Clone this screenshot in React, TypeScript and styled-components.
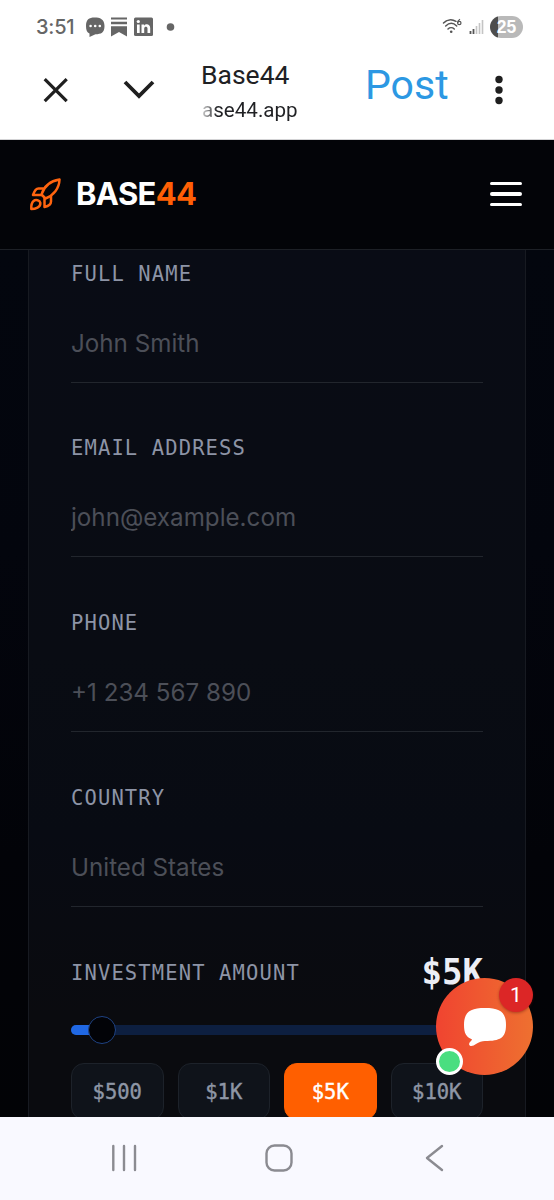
import React from "react";
import styled, { createGlobalStyle } from "styled-components";

const GlobalStyle = createGlobalStyle`
  * { box-sizing: border-box; }
  body { margin: 0; background: #020308; font-family: Inter, "Liberation Sans", sans-serif; }
  button { font: inherit; border: 0; background: none; padding: 0; margin: 0; }
`;

const mono = `"DejaVu Sans Mono", "Liberation Mono", monospace`;

const Screen = styled.div`
  width: 554px;
  height: 1200px;
  display: flex;
  flex-direction: column;
  overflow: hidden;
`;

const BrowserChrome = styled.div`
  height: 140px;
  flex: none;
  background: #fff;
  border-bottom: 1.5px solid #d3d3d5;
`;

const StatusBar = styled.div`
  height: 54px;
  padding: 0 31px 0 36px;
  display: flex;
  align-items: center;
  justify-content: space-between;
`;

const StatusGroup = styled.div`
  display: flex;
  align-items: center;
`;

const Clock = styled.span`
  width: 49px;
  font: 500 20px/24px Inter, sans-serif;
  letter-spacing: -0.2px;
  color: #666;
`;

const Battery = styled.div`
  width: 33px;
  height: 22px;
  margin-left: 6px;
  border-radius: 11px;
  background: linear-gradient(90deg, #4d4d4d 25%, #b9b9b9 25%);
  color: #fff;
  font: 700 17.5px/23px "Liberation Sans", sans-serif;
  text-align: center;
`;

const AddressBar = styled.div`
  height: 72px;
  display: flex;
  align-items: center;
  padding-left: 41px;
`;

const IconButton = styled.button<{ $gap: number }>`
  display: flex;
  margin-right: ${(p) => p.$gap}px;
`;

const PageInfo = styled.div`
  width: 164px;
  font-family: Roboto, sans-serif;
  color: #202124;
`;

const PageTitle = styled.div`
  font-size: 26.5px;
  line-height: 32px;
  margin-top: 2px;
`;

const PageUrl = styled.div`
  font-size: 20.6px;
  line-height: 26px;
  margin-top: 6px;
  padding-left: 1px;
  width: 110px;
  background: linear-gradient(90deg, #ddd 0, #202124 16px);
  background-clip: text;
  color: transparent;
`;

const PostLabel = styled.div`
  width: 130px;
  font: 400 41px/48px Roboto, sans-serif;
  color: #2c98e3;
  margin-top: -11px;
`;

const SiteHeader = styled.header`
  height: 110px;
  flex: none;
  padding: 0 32px 1px 28px;
  display: flex;
  align-items: center;
  justify-content: space-between;
  background: #030408;
  border-bottom: 1.5px solid #1d2026;
`;

const Brand = styled.div`
  display: flex;
  align-items: center;
  gap: 13px;
  color: #fff;
  font: 700 31px/40px Inter, sans-serif;
  letter-spacing: -0.65px;
`;

const Accent = styled.span`
  color: #ff5f05;
`;

const MenuButton = styled.button`
  width: 32px;
  height: 25px;
  display: flex;
  flex-direction: column;
  justify-content: space-between;
`;

const MenuLine = styled.span`
  height: 3.4px;
  border-radius: 2px;
  background: #fff;
`;

const Content = styled.main`
  height: 867px;
  flex: none;
  overflow: hidden;
  position: relative;
  padding: 0 28px;
  background: linear-gradient(180deg, #03060e 0%, #03050d 35%, #020308 70%, #020306 100%);
`;

const Card = styled.form`
  height: 900px;
  padding: 8.5px 42px 0;
  border: 1px solid #171a21;
  border-top: 0;
  background: linear-gradient(180deg, #090c15 0%, #090c13 45%, #080b13 65%, #0a0b0f 85%, #0a0b0f 100%);
`;

const Field = styled.div`
  height: 174.7px;
  display: flex;
  flex-direction: column;
  gap: 18px;
`;

const Label = styled.label`
  font: 400 20.5px/28px ${mono};
  letter-spacing: 1.12px;
  color: #8d94a6;
  white-space: nowrap;
  transform: translateY(0.5px) scaleY(1.07);
`;

const Input = styled.input`
  width: 100%;
  height: 78px;
  padding: 0;
  border: 0;
  border-bottom: 1.5px solid #22262d;
  border-radius: 0;
  outline: 0;
  background: transparent;
  font: 400 24.2px/30px Inter, sans-serif;
  &::placeholder { color: #4c4f58; opacity: 1; }
`;

const AmountRow = styled.div`
  height: 28px;
  margin-top: 1px;
  display: flex;
  align-items: center;
  justify-content: space-between;
`;

const AmountValue = styled.span`
  font: 700 34px/28px ${mono};
  color: #eceef5;
  transform: translateY(-1px) scaleY(1.06);
`;

const Track = styled.div`
  height: 10px;
  margin-top: 39px;
  border-radius: 5px;
  background: #0d1f40;
  display: flex;
  align-items: center;
`;

const Filled = styled.div`
  width: 31px;
  height: 10px;
  border-radius: 5px 0 0 5px;
  background: #2068e4;
`;

const Thumb = styled.div`
  width: 28px;
  height: 28px;
  flex: none;
  margin-left: -14px;
  border-radius: 50%;
  border: 1.5px solid #1f4384;
  background: #020307;
`;

const Presets = styled.div`
  margin-top: 28px;
  display: grid;
  grid-template-columns: repeat(4, 1fr);
  gap: 14px;
`;

const Preset = styled.button<{ $active?: boolean }>`
  height: 57px;
  border-radius: 13px;
  border: 1px solid ${(p) => (p.$active ? "#ff5f00" : "#1d222a")};
  background: ${(p) => (p.$active ? "#ff5f00" : "#0f131a")};
  color: ${(p) => (p.$active ? "#fff" : "#8e96a5")};
  font: 400 20.5px/28px ${mono};
  -webkit-text-stroke: 0.4px currentColor;
`;

const PresetText = styled.span`
  display: block;
  transform: translateY(-0.5px) scaleY(1.05);
`;

const Chat = styled.button`
  position: absolute;
  left: 436px;
  top: 728px;
  width: 97px;
  height: 97px;
  border-radius: 50%;
  background: linear-gradient(90deg, #f04430, #ee7030);
  display: flex;
  align-items: center;
  justify-content: center;
`;

const Badge = styled.span`
  position: absolute;
  right: 0;
  top: 0;
  width: 34px;
  height: 34px;
  border-radius: 50%;
  background: #dc2626;
  box-shadow: 0 1px 3px rgba(90, 20, 10, 0.45);
  color: #fff;
  font: 400 21px/34px Roboto, sans-serif;
  text-align: center;
`;

const OnlineDot = styled.span`
  position: absolute;
  left: 0;
  bottom: 0;
  width: 27px;
  height: 27px;
  border-radius: 50%;
  border: 3px solid #fff;
  background: #4ade80;
`;

const SystemNav = styled.nav`
  height: 83px;
  flex: none;
  background: #f9f9ff;
  padding: 0 107px 2px 110px;
  display: flex;
  align-items: center;
  justify-content: space-between;
`;

const fields = [
  ["Full name", "John Smith"],
  ["Email address", "john@example.com"],
  ["Phone", "+1 234 567 890"],
  ["Country", "United States"],
];

const presets = ["$500", "$1K", "$5K", "$10K"];

export default function App() {
  return (
    <Screen>
      <GlobalStyle />
      <BrowserChrome>
        <StatusBar>
          <StatusGroup>
            <Clock>3:51</Clock>
            <svg width="92" height="22" viewBox="0 0 92 22" fill="#666">
              <path d="M9.500 1.500C15 1.500 19.500 3 19.500 10s-3.500 8-9 8.300L4.500 21v-3.500C2 16.500 1 14 1 10c0-6.500 3-8.500 8.500-8.500z" />
              <g fill="#fff"><circle cx="5.600" cy="10" r="1.300" /><circle cx="10.200" cy="10" r="1.300" /><circle cx="14.800" cy="10" r="1.300" /></g>
              <path d="M26 1.500h16v2H26zM26 5.800h16v2.500H26zM26 10.300h16v10.200l-8-4.500-8 4.500z" />
              <rect x="49" y="1.500" width="19" height="18.500" rx="1.500" />
              <g fill="#fff"><circle cx="53.300" cy="5.500" r="1.600" /><path d="M52 8.500h2.700v8.500H52zM56.500 8.500h2.600v1.200c1.600-2.300 6.100-1.900 6.100 2.300v5h-2.700v-4.500c0-2.500-3.300-2.400-3.300 0V17h-2.700z" /></g>
              <circle cx="85.500" cy="11" r="3.800" />
            </svg>
          </StatusGroup>
          <StatusGroup>
            <svg width="42" height="20" viewBox="0 0 42 20" fill="none" stroke="#555" strokeWidth="1.500">
              <path d="M1.500 6C5 2.300 10 2 14 4.300M3.700 9c3.500-3.300 7.700-3.300 11 0M6 12c1.800-1.700 4.500-1.700 6.300 0" strokeLinecap="round" />
              <circle cx="9.200" cy="14.800" r="1.300" fill="#555" stroke="none" />
              <path d="M18 2.300c-1.800 1-2.400 2.600-2.400 3.700" strokeWidth="1.200" />
              <circle cx="17.300" cy="6" r="1.700" strokeWidth="1.200" />
              <path d="M28.500 14v3M31.500 12v5" strokeWidth="1.800" />
              <path d="M34.500 9v8M37.500 6v11M40.500 3v14" stroke="#c4c4c4" strokeWidth="1.600" />
            </svg>
            <Battery>25</Battery>
          </StatusGroup>
        </StatusBar>
        <AddressBar>
          <IconButton $gap={51} aria-label="Close">
            <svg width="29" height="28" viewBox="0 0 29 28" stroke="#1f1f1f" strokeWidth="3.200"><path d="M3.700 3.200l22 22M25.700 3.200l-22 22" /></svg>
          </IconButton>
          <IconButton $gap={45} aria-label="Minimize">
            <svg width="35" height="28" viewBox="0 0 35 28" fill="none" stroke="#1f1f1f" strokeWidth="3.800"><path d="M4 6l14 14L32 6" /></svg>
          </IconButton>
          <PageInfo>
            <PageTitle>Base44</PageTitle>
            <PageUrl>ase44.app</PageUrl>
          </PageInfo>
          <PostLabel>Post</PostLabel>
          <svg width="8" height="30" viewBox="0 0 8 30" fill="#1f1f1f"><circle cx="4" cy="4.500" r="3.700" /><circle cx="4" cy="15" r="3.700" /><circle cx="4" cy="25.500" r="3.700" /></svg>
        </AddressBar>
      </BrowserChrome>

      <SiteHeader>
        <Brand>
          <svg width="35" height="35" viewBox="0 0 35 35" fill="none" stroke="#ff640f" strokeWidth="2.500" strokeLinecap="round" strokeLinejoin="round">
            <path d="M13.500 17.500C16 9.500 22 4 31.500 2.500c-.3 9-6 16-14 19z" />
            <path d="M15 11.500H10.500c-3 0-4.500 3.500-5.500 6.500h8.500M23 19v5.500c0 3-3.500 4.800-6.500 5.500v-8.500" />
            <path d="M3.300 32c-.2-3.500.5-6.500 2.300-8 2-1.700 6.200-.8 6.700 1.800.6 4.500-5 6.200-9 6.200z" />
          </svg>
          <span>BASE<Accent>44</Accent></span>
        </Brand>
        <MenuButton aria-label="Menu"><MenuLine /><MenuLine /><MenuLine /></MenuButton>
      </SiteHeader>

      <Content>
        <Card>
          {fields.map(([label, placeholder]) => (
            <Field key={label}>
              <Label>{label.toUpperCase()}</Label>
              <Input placeholder={placeholder} />
            </Field>
          ))}
          <AmountRow>
            <Label>INVESTMENT AMOUNT</Label>
            <AmountValue>$5K</AmountValue>
          </AmountRow>
          <Track><Filled /><Thumb /></Track>
          <Presets>
            {presets.map((p) => (
              <Preset key={p} type="button" $active={p === "$5K"}><PresetText>{p}</PresetText></Preset>
            ))}
          </Presets>
        </Card>
        <Chat aria-label="Open chat">
          <svg width="44" height="40" viewBox="0 0 44 40" fill="#fff">
            <path d="M22 1C37 1 43 5 43 18s-6 16-21 16c-3 0-6 1-9 3-2 1.500-4.500 2.500-6 1.700-1.700-1-.7-3 .5-4.200 1-1 1.700-1.800 1.300-2.300C3 30 1 26 1 18 1 5 7 1 22 1z" />
          </svg>
          <Badge>1</Badge>
          <OnlineDot />
        </Chat>
      </Content>

      <SystemNav>
        <svg width="28" height="30" viewBox="0 0 28 30" stroke="#8b8b91" strokeWidth="2.400" strokeLinecap="round"><path d="M3.300 3v24M14 3v24M25 3v24" /></svg>
        <svg width="30" height="30" viewBox="0 0 30 30" fill="none" stroke="#8b8b91" strokeWidth="2.400"><rect x="2.500" y="2.500" width="25" height="25" rx="8" /></svg>
        <svg width="28" height="30" viewBox="0 0 28 30" fill="none" stroke="#8b8b91" strokeWidth="2.400" strokeLinecap="round" strokeLinejoin="round"><path d="M23 3L8 15l15 12" /></svg>
      </SystemNav>
    </Screen>
  );
}
